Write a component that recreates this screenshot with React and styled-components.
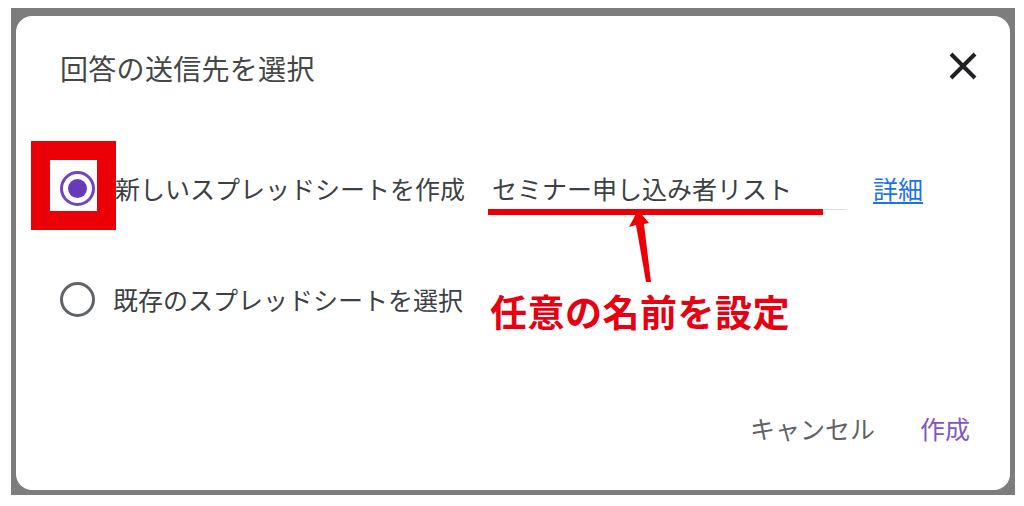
import React from "react";
import styled, { createGlobalStyle } from "styled-components";

// global
const GlobalStyle = createGlobalStyle`
  html, body {
    margin: 0;
    padding: 0;
    background: #ffffff;
  }
  body {
    font-family: "Noto Sans CJK JP", "Noto Sans", sans-serif;
  }
`;

// styled
const Page = styled.div`
  width: 1024px;
  height: 506px;
  padding: 8px 0 0 11px;
  box-sizing: border-box;
`;

const Backdrop = styled.div`
  width: 1004px;
  height: 487px;
  padding: 8px 5px 5px 5px;
  box-sizing: border-box;
  background: #7d7d7d;
`;

const Dialog = styled.div`
  width: 994px;
  height: 474px;
  box-sizing: border-box;
  background: #ffffff;
  border-radius: 16px;
  padding: 28px 40px 38px 44px;
  display: flex;
  flex-direction: column;
`;

const Header = styled.div`
  height: 48px;
  display: flex;
  align-items: center;
  justify-content: space-between;
  margin-right: -7px;
`;

const Title = styled.h2`
  margin: 0;
  font-size: 28px;
  font-weight: 400;
  color: #444746;
  letter-spacing: 0.3px;
`;

const CloseButton = styled.button`
  border: none;
  background: none;
  padding: 0;
  width: 28px;
  height: 28px;
  display: flex;
  align-items: center;
  justify-content: center;
  margin-top: -4px;
  cursor: pointer;
`;

const Options = styled.div`
  margin-top: 68px;
  display: flex;
  flex-direction: column;
  gap: 55px;
`;

const Row = styled.div`
  height: 56px;
  display: flex;
  align-items: center;
`;

const RadioWrap = styled.div`
  position: relative;
  width: 35px;
  height: 35px;
  flex: none;
`;

const Radio = styled.div`
  width: 35px;
  height: 35px;
  box-sizing: border-box;
  border-radius: 50%;
  border: 3px solid ${(p) => (p.checked ? "#6f45c4" : "#5f6368")};
  display: flex;
  align-items: center;
  justify-content: center;

  &::after {
    content: "";
    display: ${(p) => (p.checked ? "block" : "none")};
    width: 19px;
    height: 19px;
    border-radius: 50%;
    background: #673ab7;
  }
`;

const Highlight = styled.div`
  position: absolute;
  left: -29px;
  top: -30px;
  width: 85px;
  height: 89px;
  box-sizing: border-box;
  border: 19px solid #ec0008;
  pointer-events: none;
`;

const Label = styled.span`
  margin-left: ${(p) => p.offset}px;
  width: 355px;
  flex: none;
  font-size: 25px;
  color: #3c4043;
  white-space: nowrap;
`;

const NameField = styled.div`
  position: relative;
  width: 359px;
  margin-left: 18px;
  padding: 7px 0 6px 4px;
  box-sizing: border-box;
  border-bottom: 1px solid #dadce0;
  font-size: 25px;
  line-height: 30px;
  color: #3c4043;
  white-space: nowrap;
`;

const Underline = styled.div`
  position: absolute;
  left: 0;
  bottom: -6px;
  width: 335px;
  height: 6px;
  background: #ec0008;
`;

const Arrow = styled.svg`
  position: absolute;
  left: 138px;
  top: 44px;
`;

const DetailLink = styled.a`
  margin-left: 26px;
  font-size: 25px;
  color: #1a73e8;
  text-decoration: underline;
  text-underline-offset: 3px;
  cursor: pointer;
`;

const Note = styled.span`
  margin-left: 22px;
  margin-top: 24px;
  font-size: 37px;
  font-weight: 700;
  color: #e60012;
  white-space: nowrap;
  letter-spacing: 0.5px;
`;

const Footer = styled.div`
  margin-top: auto;
  height: 48px;
  display: flex;
  align-items: center;
  justify-content: flex-end;
  gap: 45px;
`;

const TextButton = styled.button`
  border: none;
  background: none;
  padding: 0;
  font-family: inherit;
  font-size: 25px;
  color: ${(p) => (p.primary ? "#7e57c2" : "#5f6368")};
  cursor: pointer;
`;

const CloseIcon = () => (
  <svg width="28" height="28" viewBox="0 0 28 28">
    <path
      d="M2 2 L26 26 M26 2 L2 26"
      stroke="#202124"
      strokeWidth="4"
      strokeLinecap="butt"
    />
  </svg>
);

const App = () => {
  return (
    <Page>
      <GlobalStyle />
      <Backdrop>
        <Dialog>
          <Header>
            <Title>回答の送信先を選択</Title>
            <CloseButton aria-label="閉じる">
              <CloseIcon />
            </CloseButton>
          </Header>
          <Options>
            <Row>
              <RadioWrap>
                <Radio checked />
                <Highlight />
              </RadioWrap>
              <Label offset={20}>新しいスプレッドシートを作成</Label>
              <NameField>
                セミナー申し込み者リスト
                <Underline />
                <Arrow width="30" height="76" viewBox="0 0 30 76">
                  <polygon
                    points="12,0 3,17 10,15 20,72 25,72 18,14 23,13"
                    fill="#ec0008"
                  />
                </Arrow>
              </NameField>
              <DetailLink>詳細</DetailLink>
            </Row>
            <Row>
              <RadioWrap>
                <Radio />
              </RadioWrap>
              <Label offset={18}>既存のスプレッドシートを選択</Label>
              <Note>任意の名前を設定</Note>
            </Row>
          </Options>
          <Footer>
            <TextButton>キャンセル</TextButton>
            <TextButton primary>作成</TextButton>
          </Footer>
        </Dialog>
      </Backdrop>
    </Page>
  );
};

export default App;
